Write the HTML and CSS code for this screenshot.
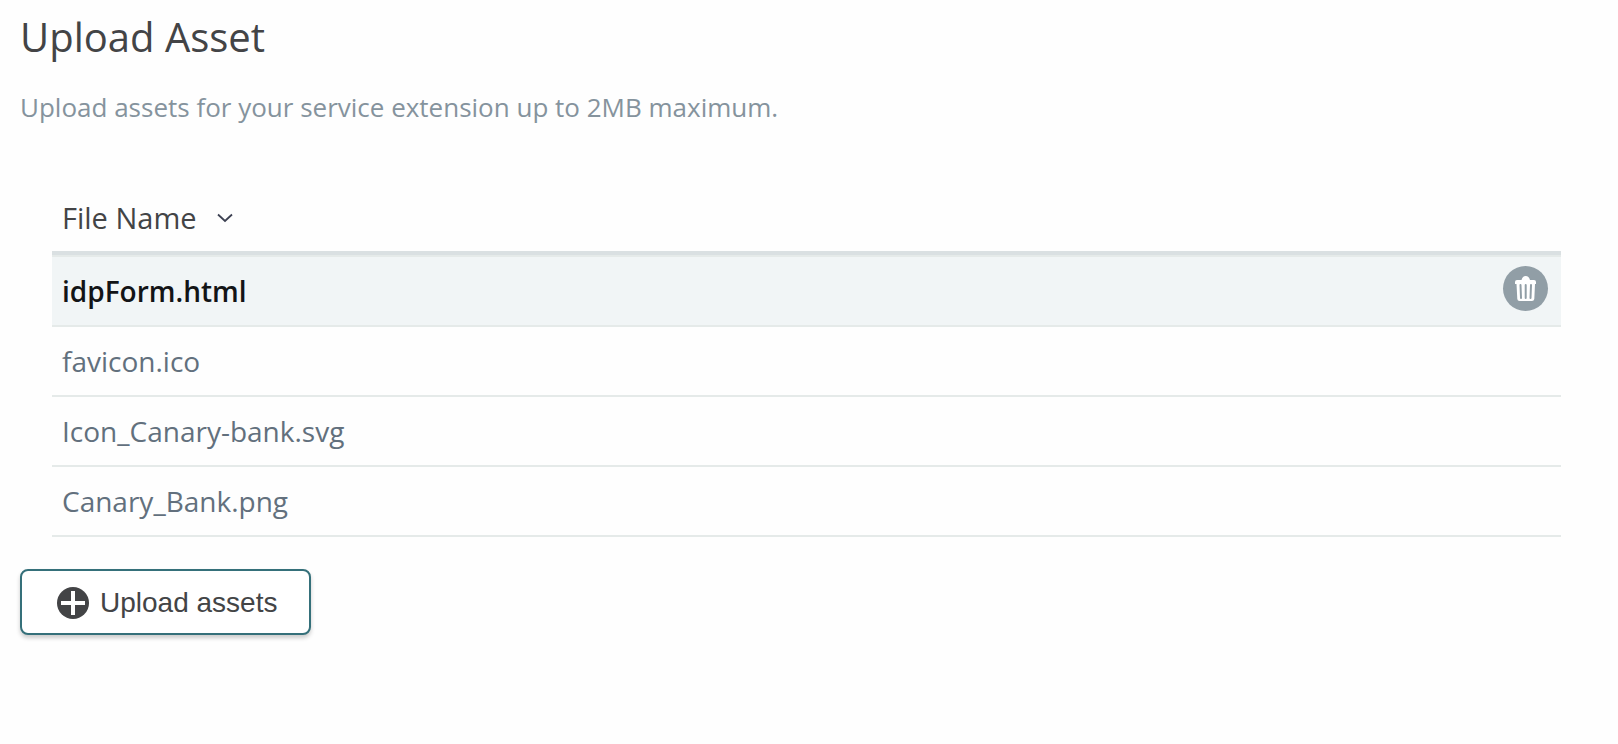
FILE: index.html
```
<!DOCTYPE html>
<html lang="en">
<head>
<meta charset="utf-8">
<title>Upload Asset</title>
<link rel="stylesheet" href="styles.css">
</head>
<body>
<main class="page">
  <h1 class="title">Upload Asset</h1>
  <p class="intro">Upload assets for your service extension up to 2MB maximum.</p>
  <div class="table-wrap">
    <table class="assets">
      <thead>
        <tr>
          <th scope="col" colspan="2">
            <button class="sort" type="button">File Name
              <svg class="chevron" viewBox="0 0 16 10" aria-hidden="true"><path d="M1 1.5L8 8L15 1.5" fill="none" stroke="#3d4152" stroke-width="1.8"/></svg>
            </button>
          </th>
        </tr>
      </thead>
      <tbody>
        <tr class="selected">
          <td>idpForm.html</td>
          <td class="action">
            <button class="delete" type="button" aria-label="Delete idpForm.html">
              <svg viewBox="0 0 45 45" aria-hidden="true">
                <path d="M12 16Q12 14 14 14H18.500Q19.500 10 22.700 10T27 14H31Q33 14 33 16V18H32L31.300 33Q31 35 29 35H16.500Q14.500 35 14.300 33L13.500 18H12Z" fill="#fff"/>
                <path d="M17.500 19L18 32M22.700 19V32M28 19L27.500 32" fill="none" stroke="#919ea6" stroke-width="2" stroke-linecap="round"/>
              </svg>
            </button>
          </td>
        </tr>
        <tr><td colspan="2">favicon.ico</td></tr>
        <tr><td colspan="2">Icon_Canary-bank.svg</td></tr>
        <tr><td colspan="2">Canary_Bank.png</td></tr>
      </tbody>
    </table>
  </div>
  <button class="upload" type="button">
    <svg class="plus" viewBox="0 0 32 32" aria-hidden="true"><circle cx="16" cy="16" r="16" fill="#434446"/><path d="M16 4V28M4 16H28" stroke="#fff" stroke-width="4"/></svg>
    Upload assets
  </button>
</main>
</body>
</html>
```
FILE: styles.css
```
* {
  box-sizing: border-box;
}

body {
  margin: 0;
  background: #fefefe;
  color: #434446;
  font-family: "Open Sans", sans-serif;
}

.page {
  padding: 9px 20px 32px;
}

.title {
  margin: 0 0 24px;
  font-size: 40px;
  font-weight: 400;
  line-height: 56px;
}

.intro {
  margin: 0;
  color: #85939d;
  font-size: 26px;
  line-height: 36px;
}

.table-wrap {
  margin: 58px 37px 32px 32px;
}

.assets {
  width: 100%;
  border-collapse: separate;
  border-spacing: 0;
  font-size: 28px;
  line-height: 38px;
}

.assets th {
  padding: 16px 10px 14px;
  border-bottom: 4px solid #dae0e2;
  text-align: left;
  font-weight: 400;
}

.sort {
  display: flex;
  align-items: center;
  gap: 20px;
  padding: 0;
  border: 0;
  background: none;
  color: inherit;
  font: inherit;
  font-size: 29px;
}

.chevron {
  width: 16px;
  height: 10px;
}

.assets td {
  padding: 15px 10px;
  border-bottom: 2px solid #e5eae9;
  color: #62707d;
}

.assets .selected td {
  border-top: 2px solid #e5eae9;
  background: #f1f5f6;
  color: #131416;
  font-weight: 600;
}

.assets .selected .action {
  width: 68px;
  padding: 0 13px 5px;
}

.delete {
  display: block;
  width: 45px;
  height: 45px;
  margin-left: auto;
  padding: 0;
  border: 0;
  border-radius: 50%;
  background: #919ea6;
}

.delete svg {
  display: block;
}

.upload {
  display: flex;
  align-items: center;
  gap: 11px;
  padding: 16px 32px 14px 35px;
  border: 2px solid #35707a;
  border-radius: 8px;
  background: #fff;
  box-shadow: 0 3px 4px rgba(0, 0, 0, 0.2);
  color: #434446;
  font-family: "Liberation Sans", Arial, sans-serif;
  font-size: 28px;
  line-height: 32px;
}

.plus {
  width: 32px;
  height: 32px;
}
```
